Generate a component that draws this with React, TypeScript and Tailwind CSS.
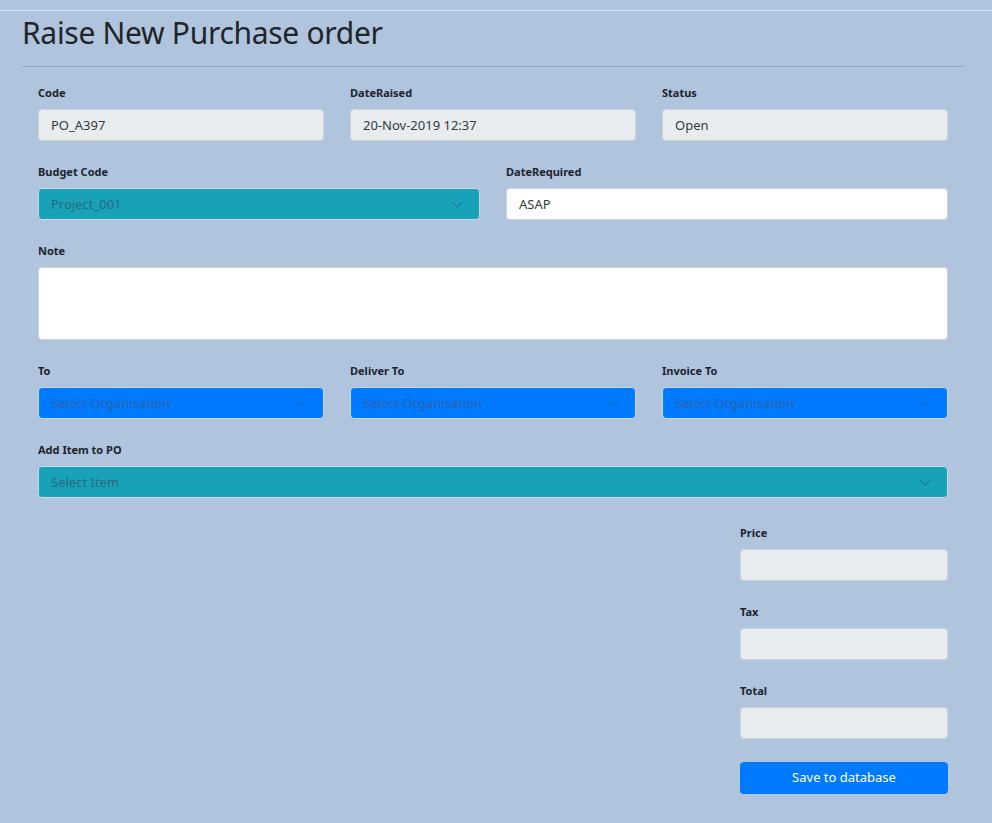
import React from 'react';

const font = { fontFamily: '"Noto Sans", "Open Sans", sans-serif' };

const Label: React.FC<{ children: React.ReactNode }> = ({ children }) => (
    <label className="block h-4 leading-4 text-[11px] font-bold text-[#1d232a] mb-2">{children}</label>
);

const ReadOnly: React.FC<{ value?: string }> = ({ value }) => (
    <div className="h-8 rounded-[4px] border border-[#ced4da] bg-[#e9ecef] px-3 pt-[1px] flex items-center text-[13px] text-[#343a40]">
        {value}
    </div>
);

const Chevron = () => (
    <svg width="12" height="8" viewBox="0 0 12 8" fill="none">
        <path d="M1 1.5 L6 6 L11 1.5" stroke="#2c4f6e" strokeWidth="1" strokeOpacity="0.7" />
    </svg>
);

// bootstrap-ish coloured select
const Select: React.FC<{ text: string; variant: 'info' | 'primary' }> = ({ text, variant }) => {
    const styles = {
        info: 'bg-[#17a2b8] text-[#2a6a7e]',
        primary: 'bg-[#007bff] text-[#2f5fa6]'
    };
    return (
        <div className={`h-8 rounded-[4px] border border-[#c8d6e8] px-3 pt-[1px] flex items-center justify-between text-[13px] ${styles[variant]}`}>
            <span>{text}</span>
            <span className="mr-1"><Chevron /></span>
        </div>
    );
};

export default function App() {
    return (
        <div className="min-h-screen bg-[#b0c4de]" style={font}>
            <div className="h-[10px]" />
            <div className="h-px bg-[#dbe4f0]" />
            <div className="ml-[22px] mr-[28px]">
                <h2 className="text-[30px] tracking-[-0.01em] leading-[42px] text-[#212529] pt-[1px] pb-[12px]">Raise New Purchase order</h2>
                <div className="h-px bg-[#94a8c2]" />
                <div className="px-4 pt-[18px] flex flex-col gap-[23px]">
                    <div className="grid grid-cols-3 gap-[26px]">
                        <div><Label>Code</Label><ReadOnly value="PO_A397" /></div>
                        <div><Label>DateRaised</Label><ReadOnly value="20-Nov-2019 12:37" /></div>
                        <div><Label>Status</Label><ReadOnly value="Open" /></div>
                    </div>
                    <div className="grid grid-cols-2 gap-[26px]">
                        <div><Label>Budget Code</Label><Select text="Project_001" variant="info" /></div>
                        <div>
                            <Label>DateRequired</Label>
                            <div className="h-8 rounded-[4px] border border-[#ced4da] bg-white px-3 pt-[1px] flex items-center text-[13px] text-[#343a40]">ASAP</div>
                        </div>
                    </div>
                    <div>
                        <Label>Note</Label>
                        <div className="h-[73px] rounded-[4px] border border-[#ced4da] bg-white" />
                    </div>
                    <div className="grid grid-cols-3 gap-[26px]">
                        <div><Label>To</Label><Select text="Select Organisation" variant="primary" /></div>
                        <div><Label>Deliver To</Label><Select text="Select Organisation" variant="primary" /></div>
                        <div><Label>Invoice To</Label><Select text="Select Organisation" variant="primary" /></div>
                    </div>
                    <div>
                        <Label>Add Item to PO</Label>
                        <Select text="Select Item" variant="info" />
                    </div>
                    <div className="flex justify-end pt-[4px]">
                        <div className="w-[208px] flex flex-col gap-[23px]">
                            <div><Label>Price</Label><ReadOnly /></div>
                            <div><Label>Tax</Label><ReadOnly /></div>
                            <div><Label>Total</Label><ReadOnly /></div>
                            <button className="h-8 rounded-[4px] bg-[#007bff] text-white text-[13px]">Save to database</button>
                        </div>
                    </div>
                </div>
            </div>
        </div>
    );
}
